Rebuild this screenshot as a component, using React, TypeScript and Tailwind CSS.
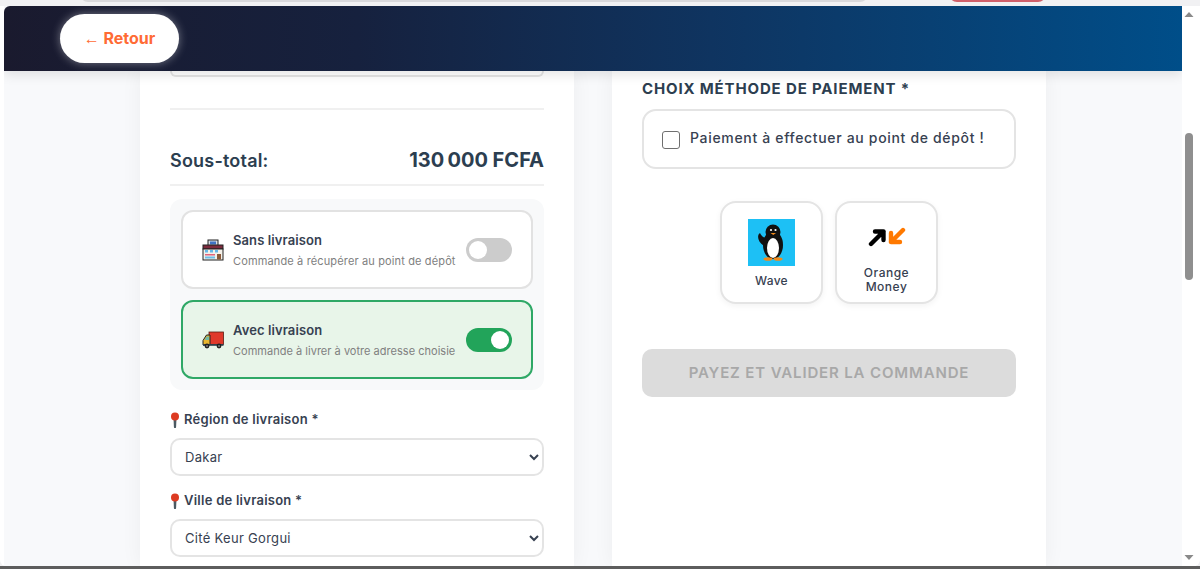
const font = { fontFamily: "Inter, 'Noto Sans', sans-serif" };

function Shop() {
  return (
    <svg width="22" height="22" viewBox="0 0 22 22" className="shrink-0">
      <rect x="6" y="1" width="10" height="6" fill="#d8dee6" stroke="#222" strokeWidth="1" />
      <rect x="8" y="2.5" width="6" height="3" fill="#3f72c4" />
      <rect x="1" y="6" width="20" height="4" fill="#7d2a3c" stroke="#222" strokeWidth="1" />
      <rect x="1" y="10" width="20" height="11" fill="#f4f1ea" stroke="#222" strokeWidth="1" />
      <rect x="3" y="11" width="3" height="2.5" fill="#66b8e8" />
      <rect x="8" y="11" width="3" height="2.5" fill="#66b8e8" />
      <rect x="13" y="11" width="3" height="2.5" fill="#66b8e8" />
      <rect x="3" y="15" width="10" height="1.5" fill="#e2637a" />
      <rect x="3" y="17.5" width="10" height="2" fill="#6dbde8" />
      <rect x="15" y="15" width="4" height="5.5" fill="#8a5a3a" />
    </svg>
  );
}

function Truck() {
  return (
    <svg width="22" height="18" viewBox="0 0 22 18" className="shrink-0">
      <rect x="7" y="1" width="14.5" height="12.5" fill="#e0392b" stroke="#5a1f14" strokeWidth="0.8" />
      <path d="M8 4H4.5L1 9.5V14h7z" fill="#e8b62f" stroke="#222" strokeWidth="1" />
      <path d="M4.6 5.5H7v3.5H2.6z" fill="#6fb9a8" />
      <rect x="1" y="13" width="20.5" height="1.8" fill="#2f3f4a" />
      <circle cx="5" cy="15" r="2.4" fill="#222" />
      <circle cx="5" cy="15" r="0.8" fill="#bbb" />
      <circle cx="17" cy="15" r="2.4" fill="#222" />
      <circle cx="17" cy="15" r="0.8" fill="#bbb" />
    </svg>
  );
}

function Pin() {
  return (
    <svg width="10" height="16" viewBox="0 0 10 16" className="shrink-0">
      <path d="M3.5 6h3l-.4 9a1.1 1.1 0 0 1-2.2 0z" fill="#4b5a62" />
      <circle cx="5" cy="4.4" r="4" fill="#dd3b22" />
    </svg>
  );
}

function Penguin() {
  return (
    <svg width="47" height="47" viewBox="0 0 47 47" className="block">
      <rect width="47" height="47" fill="#1dc0f5" />
      <path d="M18 19 C14 18 13 16 12 14 C9 16 9 22 16 27z" fill="#111" />
      <ellipse cx="25" cy="26" rx="10" ry="14" fill="#111" />
      <ellipse cx="25" cy="13" rx="7.5" ry="7.5" fill="#111" />
      <ellipse cx="25" cy="29" rx="6" ry="10" fill="#fff" />
      <circle cx="23" cy="11" r="1.1" fill="#fff" />
      <circle cx="27.5" cy="11" r="1.1" fill="#fff" />
      <path d="M22.5 14h5.5l-2.7 2z" fill="#f08a1d" />
      <ellipse cx="20" cy="40" rx="4.5" ry="1.8" fill="#f08a1d" />
      <ellipse cx="30" cy="40" rx="4.5" ry="1.8" fill="#f08a1d" />
    </svg>
  );
}

function OrangeLogo() {
  return (
    <svg width="38" height="20" viewBox="0 0 38 20" className="block">
      <g fill="none" strokeWidth="4.4" strokeLinecap="round" strokeLinejoin="round">
        <path d="M7 4.5H15.5V13M15.5 4.5L3 17" stroke="#000" />
        <path d="M23 6V15H32M23 15L35 3" stroke="#ff7900" />
      </g>
    </svg>
  );
}

function Toggle({ on }: { on: boolean }) {
  return (
    <div
      className={`flex h-6 w-[46px] shrink-0 items-center rounded-full px-[3px] ${on ? "justify-end bg-[#22a45a]" : "justify-start bg-[#cccccc]"}`}
    >
      <div className="h-[18px] w-[18px] rounded-full bg-white" />
    </div>
  );
}

function DeliveryOption({
  icon,
  title,
  sub,
  on,
  subClass,
}: {
  icon: React.ReactNode;
  title: string;
  sub: string;
  on: boolean;
  subClass: string;
}) {
  return (
    <div
      className={`flex h-[79px] items-center rounded-[12px] border-2 pl-[19px] pr-[19px] ${on ? "border-[#2fa866] bg-[#e8f5e9]" : "border-[#e2e2e2] bg-white"}`}
    >
      <div className="flex w-[31px] shrink-0 justify-start">{icon}</div>
      <div className="min-w-0 flex-1">
        <div className="text-[13px] font-semibold leading-[18px] tracking-[0.1px] text-[#374151]">{title}</div>
        <div className={`mt-[4px] whitespace-nowrap text-[11px] leading-[16px] text-[#808080] ${subClass}`}>{sub}</div>
      </div>
      <Toggle on={on} />
    </div>
  );
}

function Field({ label, value, className }: { label: string; value: string; className?: string }) {
  return (
    <div className={className}>
      <div className="flex h-5 items-center gap-[4px] text-[13px] font-semibold tracking-[0.25px] text-[#374151]">
        <Pin />
        <span>{label}</span>
      </div>
      <select
        defaultValue={value}
        className="mt-[8px] block h-[38px] w-full rounded-[10px] border-2 border-[#e4e4e4] bg-white pl-[9px] pr-2 text-[13px] tracking-[0.3px] text-[#374151]"
        style={{ appearance: "auto" }}
      >
        <option>{value}</option>
      </select>
    </div>
  );
}

function PayCard({ children }: { children: React.ReactNode }) {
  return (
    <div className="flex h-[103px] w-[103px] flex-col items-center rounded-[16px] border-2 border-[#e4e4e4] bg-white shadow-[0_2px_6px_rgba(0,0,0,0.05)]">
      {children}
    </div>
  );
}

export default function App() {
  return (
    <div className="flex h-[569px] w-[1200px] flex-col overflow-hidden bg-[#f1f1f3]" style={font}>
      <div className="relative h-[6px] shrink-0 overflow-hidden">
        <div className="absolute left-[80px] top-[-10px] h-3 w-[788px] rounded-b-[8px] border-b-2 border-[#d9d9dc] bg-white" />
        <div className="absolute left-[949px] top-[-10px] h-3 w-[97px] rounded-b-[8px] border-b-2 border-[#d0606a] bg-white" />
      </div>

      <div className="flex min-h-0 flex-1 rounded-b-[6px] bg-white pl-1 pr-1">
        <div className="flex min-w-0 flex-1 flex-col overflow-hidden bg-[#f8f9fb]">
          <header className="relative z-10 flex h-[65px] shrink-0 items-center rounded-tl-[6px] bg-[linear-gradient(90deg,#1a1a2e_0%,#16213e_30%,#0f3460_60%,#004e89_100%)] pl-14 shadow-[0_4px_12px_rgba(0,0,0,0.1)]">
            <button className="h-[49px] w-[119px] rounded-full bg-white text-[16px] font-bold text-[#ff6b35] shadow-[0_0_10px_rgba(255,255,255,0.4)]">
              <span className="font-normal" style={{ fontFamily: "'Liberation Sans', sans-serif" }}>←</span> Retour
            </button>
          </header>

          <main className="flex min-h-0 flex-1 justify-between pl-[136px] pr-[136px]">
            <section className="h-full w-[434px] bg-white px-[30px] shadow-[0_0_20px_rgba(0,0,0,0.05)]">
              <div className="h-[6px] rounded-b-[10px] border-x-2 border-b-2 border-[#e4e4e4]" />
              <div className="mt-[31px] border-t-2 border-[#f0f0f0]" />
              <div className="flex items-center justify-between border-b-2 border-[#f0f0f0] pt-[37px] pb-[10px] text-[#2c3e50]">
                <span className="text-[18px] font-semibold leading-[27px] tracking-[0.2px]">Sous-total:</span>
                <span className="text-[20px] font-bold leading-[27px]">130{"\u202f"}000 FCFA</span>
              </div>
              <div className="mt-[13px] flex flex-col gap-[11px] rounded-[12px] bg-[#f8f9fa] p-[11px]">
                <DeliveryOption icon={<Shop />} title="Sans livraison" sub="Commande à récupérer au point de dépôt" on={false} subClass="tracking-[0.14px]" />
                <DeliveryOption icon={<Truck />} title="Avec livraison" sub="Commande à livrer à votre adresse choisie" on={true} subClass="tracking-[0.02px]" />
              </div>
              <Field className="mt-[20px]" label="Région de livraison *" value="Dakar" />
              <Field className="mt-[15px]" label="Ville de livraison *" value="Cité Keur Gorgui" />
            </section>

            <section className="h-full w-[434px] bg-white px-[30px] shadow-[0_0_20px_rgba(0,0,0,0.05)]">
              <h2 className="mt-[8px] text-[15px] font-bold leading-5 tracking-[0.85px] text-[#2c3e50]">
                CHOIX MÉTHODE DE PAIEMENT *
              </h2>
              <label className="mt-[10px] flex h-[60px] w-[374px] items-center gap-[10px] rounded-[14px] border-2 border-[#e4e4e4] bg-white pl-[18px]">
                <span className="mt-[2px] h-[18px] w-[18px] shrink-0 rounded-[3px] border-[1.5px] border-[#6f6f6f] bg-white" />
                <span className="mb-[4px] text-[14px] font-medium tracking-[0.67px] text-[#374151]">
                  Paiement à effectuer au point de dépôt !
                </span>
              </label>
              <div className="mt-[32px] flex w-[374px] justify-center gap-[12px]">
                <PayCard>
                  <div className="mt-4">
                    <Penguin />
                  </div>
                  <span className="mt-[7px] text-[12px] font-medium leading-4 tracking-[0.3px] text-[#374151]">Wave</span>
                </PayCard>
                <PayCard>
                  <div className="mt-[24px]">
                    <OrangeLogo />
                  </div>
                  <span className="mt-[19px] text-center text-[12px] font-medium leading-[14px] tracking-[0.5px] text-[#374151]">
                    Orange
                    <br />
                    Money
                  </span>
                </PayCard>
              </div>
              <button className="mt-[45px] h-[48px] w-[374px] rounded-[10px] bg-[#dcdcdc] text-[15px] font-semibold tracking-[0.85px] text-[#a8a8a8]">
                PAYEZ ET VALIDER LA COMMANDE
              </button>
            </section>
          </main>
        </div>

        <aside className="flex w-[14px] shrink-0 flex-col items-center bg-white pt-[5px]">
          <svg width="10" height="7" viewBox="0 0 10 7">
            <path d="M5 1l4.5 5H.5z" fill="#8a8a8a" />
          </svg>
          <div className="mt-[115px] h-[147px] w-2 rounded-full bg-[#8f8f8f]" />
          <div className="flex-1" />
          <svg width="10" height="7" viewBox="0 0 10 7" className="mb-[5px]">
            <path d="M5 6L.5 1h9z" fill="#8a8a8a" />
          </svg>
        </aside>
      </div>

      <div className="h-[3px] shrink-0 bg-[#5d5d5d]" />
    </div>
  );
}
